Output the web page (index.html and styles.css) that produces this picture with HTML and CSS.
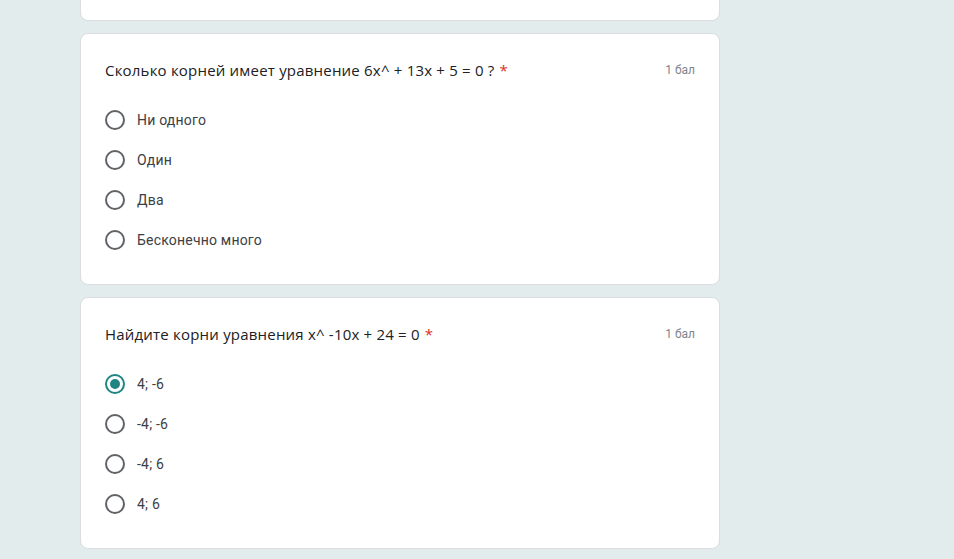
FILE: index.html
```html
<!DOCTYPE html>
<html lang="ru">

<head>
    <meta charset="UTF-8">
    <meta name="viewport" content="width=device-width, initial-scale=1.0">
    <title>Тест</title>
    <link rel="stylesheet" href="styles.css">
</head>

<body>
    <div class="form">
        <div class="card tail"></div>

        <div class="card">
            <div class="question">
                <span class="title">Сколько корней имеет уравнение 6x^ + 13x + 5 = 0 ?<span class="req">*</span></span>
                <span class="points">1 бал</span>
            </div>
            <div class="options">
                <label class="option"><span class="radio"></span>Ни одного</label>
                <label class="option"><span class="radio"></span>Один</label>
                <label class="option"><span class="radio"></span>Два</label>
                <label class="option"><span class="radio"></span>Бесконечно много</label>
            </div>
        </div>

        <div class="card">
            <div class="question">
                <span class="title">Найдите корни уравнения x^ -10x + 24 = 0<span class="req">*</span></span>
                <span class="points">1 бал</span>
            </div>
            <div class="options">
                <label class="option"><span class="radio checked"></span>4; -6</label>
                <label class="option"><span class="radio"></span>-4; -6</label>
                <label class="option"><span class="radio"></span>-4; 6</label>
                <label class="option"><span class="radio"></span>4; 6</label>
            </div>
        </div>
    </div>
</body>

</html>
```

FILE: styles.css
```css
* {
    box-sizing: border-box;
}

body {
    margin: 0;
    background: #e3eced;
    font-family: Roboto, "Liberation Sans", Arial, sans-serif;
    color: #202124;
}

.form {
    width: 640px;
    margin-left: 80px;
    display: flex;
    flex-direction: column;
    gap: 12px;
}

.card {
    background: #fff;
    border: 1px solid #dadce0;
    border-radius: 8px;
    padding: 24px;
}

.tail {
    height: 21px;
    padding: 0;
    border-top: none;
    border-radius: 0 0 8px 8px;
}

.question {
    display: flex;
    justify-content: space-between;
    align-items: center;
    height: 24px;
}

.title {
    font-family: "Open Sans", "Noto Sans", sans-serif;
    font-size: 15px;
    letter-spacing: 0.2px;
    color: #202124;
}

.req {
    color: #d93025;
    margin-left: 5px;
}

.points {
    font-size: 12px;
    color: #80868b;
}

.options {
    margin-top: 18px;
}

.option {
    display: flex;
    align-items: center;
    height: 40px;
    font-size: 14px;
    letter-spacing: 0.2px;
    color: #3c4043;
}

.radio {
    width: 20px;
    height: 20px;
    border: 2px solid #5f6368;
    border-radius: 50%;
    margin-right: 12px;
    display: flex;
    align-items: center;
    justify-content: center;
}

.radio.checked {
    border-color: #1e8584;
}

.radio.checked::after {
    content: "";
    width: 10px;
    height: 10px;
    border-radius: 50%;
    background: #1e8584;
}
```
